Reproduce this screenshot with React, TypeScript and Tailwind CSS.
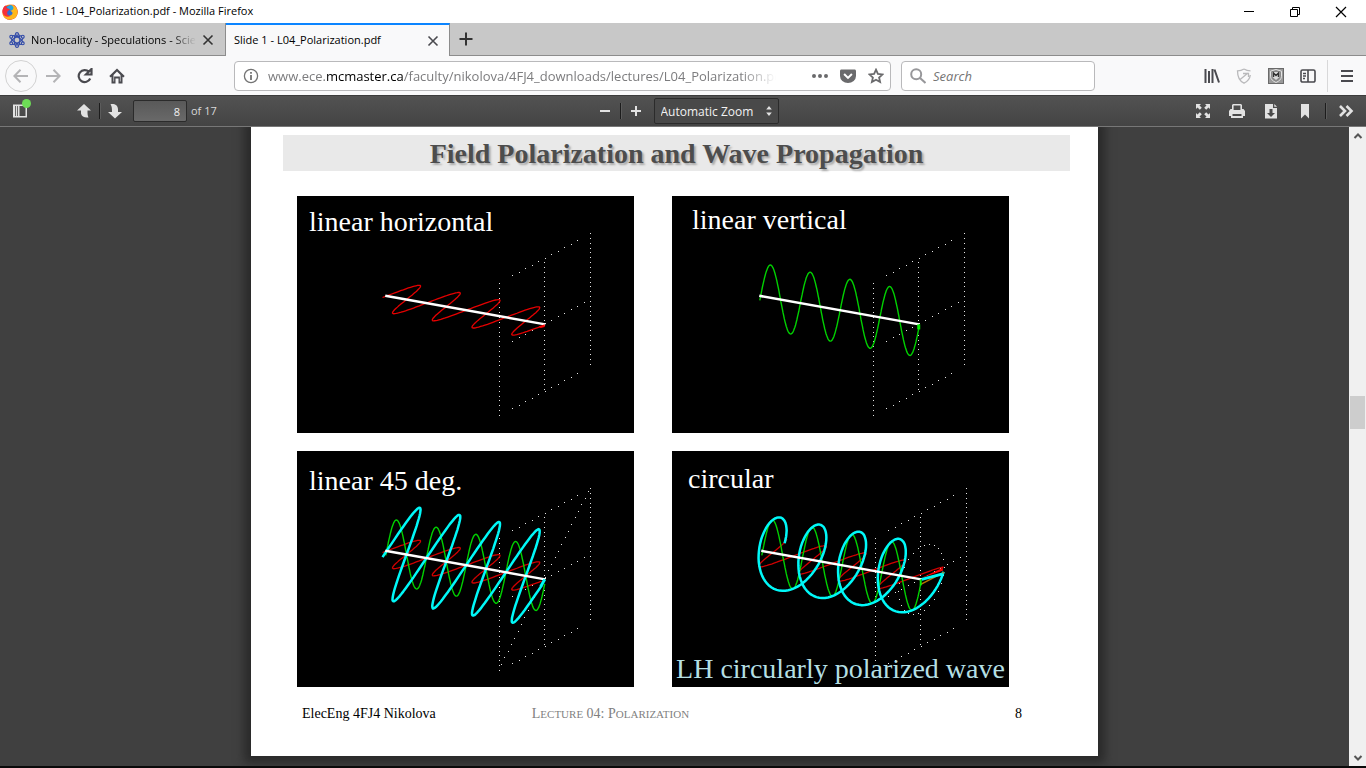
import React, { useState } from "react";

type PlotKind = "horizontal" | "vertical" | "diagonal" | "circular";
type Point = [number, number];

// Plot geometry, in panel units (336 x 236)
const START: Point = [88.5, 99.5];
const END: Point = [247, 128];
const H_AMP: Point = [23, -12.3];
const V_AMP = 32.6;
const CYCLES = 4;
const PHASE = -0.14;

const trace = (h: (a: number) => number, v: (a: number) => number) => {
  const points: string[] = [];
  for (let i = 0; i <= 240; i++) {
    const t = i / 240;
    const a = t * CYCLES * 2 * Math.PI + PHASE;
    const x = START[0] + (END[0] - START[0]) * t + H_AMP[0] * h(a);
    const y =
      START[1] + (END[1] - START[1]) * t + H_AMP[1] * h(a) - V_AMP * v(a);
    points.push(`${x.toFixed(1)},${y.toFixed(1)}`);
  }
  return points.join(" ");
};

const zero = () => 0;

const dotsBetween = (a: Point, b: Point, count: number): Point[] =>
  Array.from({ length: count + 1 }, (_, i) => [
    a[0] + ((b[0] - a[0]) * i) / count,
    a[1] + ((b[1] - a[1]) * i) / count,
  ]);

const planeDots: Point[] = [
  ...dotsBetween([201, 87], [201, 218], 27),
  ...dotsBetween([246, 66], [246, 192], 26),
  ...dotsBetween([292, 37], [292, 168], 27),
  ...dotsBetween([214, 79], [279, 44], 10),
  ...dotsBetween([214, 145], [286, 106], 11),
  ...dotsBetween([214, 211], [279, 176], 10),
];

const diagonalDots = dotsBetween([203, 212], [290, 40], 26);

const circleDots: Point[] = Array.from({ length: 26 }, (_, i) => {
  const a = (i / 26) * 2 * Math.PI;
  return [
    END[0] + H_AMP[0] * Math.cos(a),
    END[1] + H_AMP[1] * Math.cos(a) - V_AMP * Math.sin(a),
  ];
});

const Dots = ({ points }: { points: Point[] }) => (
  <g fill="#e4e4e4" shapeRendering="crispEdges">
    {points.map(([x, y], i) => (
      <rect
        key={i}
        x={Math.round(x)}
        y={Math.round(y)}
        width="1"
        height="1"
      />
    ))}
  </g>
);

const viewBoxes: Record<PlotKind, string> = {
  horizontal: "0 0 336 236",
  vertical: "1 0 336 236",
  diagonal: "0 0 336 236",
  circular: "-1 0 336 236",
};

const WavePlot = ({ kind }: { kind: PlotKind }) => {
  const circular = kind === "circular";
  const h = circular ? Math.cos : Math.sin;
  const both = kind === "diagonal" || circular;
  return (
    <svg viewBox={viewBoxes[kind]} className="block w-full bg-black" fill="none">
      <Dots points={planeDots} />
      {kind === "diagonal" && <Dots points={diagonalDots} />}
      {circular && <Dots points={circleDots} />}
      {kind !== "vertical" && (
        <polyline
          points={trace(h, zero)}
          stroke={both ? "#d00000" : "#e40000"}
          strokeWidth="1.3"
        />
      )}
      {kind !== "horizontal" && (
        <polyline
          points={trace(zero, Math.sin)}
          stroke="#00d000"
          strokeWidth="1.4"
        />
      )}
      {both && (
        <polyline
          points={trace(h, Math.sin)}
          stroke="#00f8f8"
          strokeWidth="2.5"
          strokeLinejoin="round"
        />
      )}
      <path d="M88 99.5L247.5 128" stroke="#fff" strokeWidth="2.5" />
      {kind === "horizontal" && (
        <path d="M241 130l6-2v2.500l-4 1z" fill="#f00" />
      )}
      {kind === "vertical" && <path d="M245.500 128h3v5h-3z" fill="#0e0" />}
      {kind === "diagonal" && (
        <path d="M247 128l-4 7" stroke="#00f8f8" strokeWidth="3" />
      )}
      {circular && (
        <>
          <path d="M247 127l22-10.500v3z" fill="#f00" />
          <path d="M247 133l23-12" stroke="#b87400" strokeWidth="1.5" />
          <path d="M247 128v6" stroke="#0e0" strokeWidth="2" />
          <path d="M248 128l21-5.500" stroke="#00f8f8" strokeWidth="3" />
        </>
      )}
    </svg>
  );
};

const FirefoxLogo = () => (
  <svg viewBox="0 0 16 16" className="h-4 w-4">
    <circle cx="8" cy="8" r="7.600" fill="#ff7a18" />
    <path d="M.6 6C1.500 3 3 2 4 1.500L6 4l5-3.500c3 1 5 4.500 4.600 8A7.600 7.600 0 0 1 1 11z" fill="#e8283c" />
    <circle cx="8.500" cy="6.500" r="5.200" fill="#2f6fd6" />
    <path d="M5 3c2-2 5-2.500 7-1l1 3-3 1-4-.5z" fill="#23a5e0" />
    <path d="M8 6.500c2 0 3-.5 3.500-2.500C11 2 9.500 1 8.500.6c4 .2 7 3 7.100 7.400C15.600 13 12 15.600 8 15.600c-4 0-7-2.600-7.500-6.600C1 10 3 12 6 12c3.500 0 5.500-2.500 4-4z" fill="#ffb81c" />
    <path d="M.5 8c-.2-2.500.8-5 3-6.500L4.500 4 8 5.200 5.500 7.500C4.500 10 6 12 8.500 12 5 14 1 12 .5 8z" fill="#f5303a" />
  </svg>
);

const AtomIcon = () => (
  <svg viewBox="0 0 16 16" className="h-4 w-4" fill="none" stroke="#2f49a8" strokeWidth="1.1">
    <ellipse cx="8" cy="8" rx="2.800" ry="6.700" />
    <ellipse cx="8" cy="8" rx="2.800" ry="6.700" transform="rotate(60 8 8)" />
    <ellipse cx="8" cy="8" rx="2.800" ry="6.700" transform="rotate(120 8 8)" />
    <g fill="#c8c8c8">
      <circle cx="8" cy="2" r="1.400" />
      <circle cx="8" cy="14" r="1.400" />
      <circle cx="2.200" cy="4.700" r="1.400" />
      <circle cx="13.800" cy="4.700" r="1.400" />
      <circle cx="2.200" cy="11.300" r="1.400" />
      <circle cx="13.800" cy="11.300" r="1.400" />
    </g>
  </svg>
);

const Icon = ({
  d,
  filled = false,
  width = 2,
}: {
  d: string;
  filled?: boolean;
  width?: number;
}) => (
  <svg
    viewBox="0 0 16 16"
    className="h-4 w-4 shrink-0"
    fill={filled ? "currentColor" : "none"}
    fillRule="evenodd"
    stroke={filled ? "none" : "currentColor"}
    strokeWidth={width}
  >
    <path d={d} />
  </svg>
);

const IconButton = ({
  label,
  className = "text-[#4a4a4f]",
  children,
}: {
  label: string;
  className?: string;
  children: React.ReactNode;
}) => (
  <button
    aria-label={label}
    className={`flex h-8 w-8 shrink-0 items-center justify-center ${className}`}
  >
    {children}
  </button>
);

const ToolbarButton = ({
  label,
  d,
}: {
  label: string;
  d: string;
}) => (
  <button
    aria-label={label}
    className="flex h-6 w-[34px] shrink-0 items-center justify-center text-[#e2e2e2]"
  >
    <Icon d={d} filled />
  </button>
);

const Divider = () => (
  <div className="h-4 w-px shrink-0 bg-[#1c1c1c] shadow-[1px_0_0_#5c5c5c]" />
);

const TitleBar = () => (
  <header className="flex h-[23px] shrink-0 items-center bg-white pl-0.5 text-black">
    <FirefoxLogo />
    <span className="ml-[5px] text-[11px]">
      Slide 1 - L04_Polarization.pdf - Mozilla Firefox
    </span>
    <div className="ml-auto flex pr-0.5">
      <button aria-label="Minimize" className="flex h-[22px] w-[46px] items-center justify-center">
        <Icon d="M3 7.500h10" width={1} />
      </button>
      <button aria-label="Restore" className="flex h-[22px] w-[46px] items-center justify-center">
        <Icon d="M3.500 5.500h7v7h-7zM5.500 5V3.500h7v7H11" width={1} />
      </button>
      <button aria-label="Close" className="flex h-[22px] w-[46px] items-center justify-center">
        <Icon d="M3 3l10 10M13 3L3 13" width={1.2} />
      </button>
    </div>
  </header>
);

const CLOSE = "M3.500 3.500l9 9M12.500 3.500l-9 9";

const TabStrip = () => (
  <div className="flex h-[33px] shrink-0 bg-[#c8c8c8] text-[11px] text-black">
    <div className="flex w-[226px] items-center border-r border-b border-[#8c8c8c] pt-0.5 pr-[9px] pl-[9px]">
      <AtomIcon />
      <a
        href="#speculations"
        className="ml-1.5 min-w-0 flex-1 overflow-hidden whitespace-nowrap [mask-image:linear-gradient(to_right,#000_85%,transparent)]"
      >
        Non-locality - Speculations - Scientific
      </a>
      <button aria-label="Close tab" className="ml-1 text-[#333]">
        <Icon d={CLOSE} width={1.6} />
      </button>
    </div>
    <div className="flex w-56 items-center border-t-2 border-r border-t-[#0a84ff] border-r-[#8c8c8c] bg-[#f9f9fa] pr-2 pl-2">
      <a href="#slide-1" className="flex-1 whitespace-nowrap">
        Slide 1 - L04_Polarization.pdf
      </a>
      <button aria-label="Close tab" className="text-[#4a4a4f]">
        <Icon d={CLOSE} width={1.6} />
      </button>
    </div>
    <div className="flex flex-1 border-b border-[#8c8c8c]">
      <button aria-label="New tab" className="flex w-8 items-center justify-center text-[#333]">
        <Icon d="M8 1.500v13M1.500 8h13" width={2} />
      </button>
    </div>
  </div>
);

const NavBar = () => (
  <nav className="flex h-[39px] shrink-0 items-center bg-[#f9f9fa] pl-[5px]">
    <button
      aria-label="Back"
      className="flex h-8 w-8 shrink-0 items-center justify-center rounded-full border border-[#d2d2d2] text-[#b4b4b6]"
    >
      <Icon d="M15 8H1.500M7.500 1.800L1.400 8l6.100 6.200" />
    </button>
    <IconButton label="Forward" className="text-[#b4b4b6]">
      <Icon d="M1 8h13.500M8.500 1.800L14.600 8l-6.100 6.200" />
    </IconButton>
    <IconButton label="Reload">
      <Icon d="M13.200 10.500A6 6 0 1 1 12 3.900M14.500 1v5.500H9z" width={2.2} />
    </IconButton>
    <IconButton label="Home">
      <Icon
        filled
        d="M8 .5l7.700 7.600-1.400 1.300-.8-.7V15.500H9.500V10.500h-3v5h-4V8.700l-.8.700L.3 8.100zM8 3.400L4.500 6.900v6.600h.6V8.600h5.800v4.900h.6V6.900z"
      />
    </IconButton>

    <div className="ml-[101px] flex h-[30px] min-w-0 flex-1 items-center rounded-sm border border-[#b9b9bb] bg-white">
      <span className="ml-2 text-[#737373]">
        <svg viewBox="0 0 16 16" className="h-4 w-4" fill="none" stroke="currentColor">
          <circle cx="8" cy="8" r="6.600" strokeWidth="1.300" />
          <path d="M8 7v5M8 4v1.800" strokeWidth="1.800" />
        </svg>
      </span>
      <a
        href="#address"
        className="ml-[9px] min-w-0 flex-1 overflow-hidden pt-0.5 text-[13px] whitespace-nowrap text-[#7c7c7e] [mask-image:linear-gradient(to_right,#000_93%,transparent)]"
      >
        www.ece.<span className="text-black">mcmaster.ca</span>
        /faculty/nikolova/4FJ4_downloads/lectures/L04_Polarization.pdf
      </a>
      <div className="ml-9 flex gap-3 pr-1.5 text-[#6a6a6c]">
        <button aria-label="Page actions">
          <Icon filled d="M0 8a2 2 0 1 1 4 0 2 2 0 0 1-4 0M6 8a2 2 0 1 1 4 0 2 2 0 0 1-4 0M12 8a2 2 0 1 1 4 0 2 2 0 0 1-4 0" />
        </button>
        <button aria-label="Save to Pocket">
          <Icon filled d="M1.500 1.500h13c.9 0 1.500.6 1.500 1.500v5a8 7 0 0 1-16 0V3c0-.9.6-1.500 1.500-1.500zM4.800 5.300L3.400 6.700 8 11.200l4.600-4.500-1.400-1.400L8 8.400z" />
        </button>
        <button aria-label="Bookmark this page">
          <Icon d="M8 1.700l1.900 4.200 4.700.5-3.500 3.100 1 4.600L8 11.800l-4.100 2.300 1-4.600L1.400 6.400l4.700-.5z" width={1.8} />
        </button>
      </div>
    </div>

    <div className="mr-[101px] ml-2.5 flex h-[30px] w-[194px] items-center rounded-sm border border-[#b9b9bb] bg-white pl-2">
      <span className="text-[#97979a]">
        <Icon d="M10 10l5.500 5M11.200 6.200a5 5 0 1 1-10 0 5 5 0 0 1 10 0z" />
      </span>
      <input
        aria-label="Search"
        placeholder="Search"
        className="ml-[7px] w-0 flex-1 pt-0.5 text-[13px] italic outline-none placeholder:text-[#757575]"
      />
    </div>

    <IconButton label="Library">
      <Icon d="M1.500 1v14M5 3v12M8.500 1v14M10.500 1.500L15 14.500" />
    </IconButton>
    <IconButton label="Tracking protection" className="text-[#b9b9bb]">
      <Icon d="M8 1C6 2.300 4 2.800 1.500 2.800 1.500 9 3 13 8 15.200 12.500 13 14 10 14.300 7M8 1c2 1.300 4 1.800 6.500 1.800M3.500 12L12 5M7 5.500h5.500V9" width={1.3} />
    </IconButton>
    <IconButton label="McAfee">
      <svg viewBox="0 0 16 16" className="h-4 w-4">
        <path d="M0 0h16v16H0z" fill="#6a6a6a" />
        <path d="M1 1h14v14H1z" fill="#999" />
        <path d="M8 1.500l5.500 1.700v5c0 3-2.500 5-5.500 6.300-3-1.300-5.500-3.300-5.500-6.300v-5z" fill="#8a8a8a" stroke="#e4e4e4" />
        <path d="M4.500 4h7v5L8 12 4.500 9z" fill="#ddd" />
        <path d="M5.500 9V5L8 7.500 10.500 5v4" fill="none" stroke="#333" strokeWidth="1.500" />
      </svg>
    </IconButton>
    <IconButton label="Sidebars">
      <Icon d="M2.500 2h11A1.500 1.500 0 0 1 15 3.500v9a1.500 1.500 0 0 1-1.500 1.500h-11A1.500 1.500 0 0 1 1 12.500v-9A1.500 1.500 0 0 1 2.500 2zM8 2v12M3 5.500h3M3 8h3M3 10.500h2" width={1.6} />
    </IconButton>
    <div className="ml-[3px] h-8 w-px shrink-0 bg-[#d8d8d9]" />
    <div className="pr-[3px] pl-[3px]">
      <IconButton label="Menu">
        <Icon d="M2 3h12M2 8h12M2 13h12" />
      </IconButton>
    </div>
  </nav>
);

const PdfToolbar = () => {
  const [page, setPage] = useState("8");
  return (
    <div className="flex h-8 shrink-0 items-center border-t border-b border-t-[#3c3c3c] border-b-[#777] bg-linear-to-b from-[#525252] to-[#444] text-[11px] text-[#d9d9d9]">
      <div className="flex flex-1 items-center">
        <button aria-label="Toggle Sidebar" className="relative ml-3 h-4 w-4 text-[#e2e2e2]">
          <Icon filled d="M1 1.500h14v13H1zM7.500 3v10h6V3zM3 3v10h.8V3zM5 3v10h.8V3z" />
          <span className="absolute -top-1 left-2.5 h-[9px] w-[9px] rounded-full bg-[#6ddc56]" />
        </button>
        <div className="ml-[41px] flex items-center">
          <button aria-label="Previous Page" className="flex w-[30px] justify-center text-[#e2e2e2]">
            <Icon filled d="M8 1l7 6.500h-3.500c0 3.500 0 5 1 7-4 .5-7-1-7.500-4V7.500H1z" />
          </button>
          <Divider />
          <button aria-label="Next Page" className="flex w-[30px] justify-center text-[#e2e2e2]">
            <Icon filled d="M8 15.500L1 9h4c0-3.500 0-5.500-1.500-7.800 4-.7 7.500 1 7.500 5V9h4z" />
          </button>
        </div>
        <input
          aria-label="Page"
          value={page}
          onChange={(e) => setPage(e.target.value)}
          className="ml-[3px] h-[22px] w-[54px] rounded-xs border border-[#2b2b2b] bg-linear-to-b from-[#595959] to-[#696969] px-1.5 text-right text-[#f2f2f2] outline-none"
        />
        <span className="ml-1">of 17</span>
      </div>

      <div className="flex items-center pl-0.5">
        <button aria-label="Zoom Out" className="flex w-[30px] justify-center text-[#e2e2e2]">
          <Icon d="M3 8h10" />
        </button>
        <Divider />
        <button aria-label="Zoom In" className="flex w-[30px] justify-center text-[#e2e2e2]">
          <Icon d="M3 8h10M8 3v10" />
        </button>
        <div className="relative ml-[3px]">
          <select
            aria-label="Zoom"
            className="h-[26px] w-[125px] appearance-none rounded-xs border border-[#2b2b2b] bg-[#494949] pt-0.5 pl-1.5 text-xs text-[#f2f2f2] outline-none"
          >
            <option>Automatic Zoom</option>
            <option>Actual Size</option>
            <option>Page Fit</option>
          </select>
          <svg viewBox="0 0 6 10" className="pointer-events-none absolute top-2 right-[7px] h-2.5 w-1.5" fill="#e2e2e2">
            <path d="M3 0l2.800 3.500H.2zM3 10L.2 6.500h5.600z" />
          </svg>
        </div>
      </div>

      <div className="flex flex-1 items-center justify-end">
        <ToolbarButton
          label="Presentation Mode"
          d="M1 1h5L4.500 2.500l2.300 2.300-2 2-2.300-2.300L1 6zM15 1v5l-1.500-1.500-2.300 2.300-2-2 2.300-2.300L10 1zM1 15v-5l1.500 1.500 2.300-2.300 2 2-2.300 2.300L6 15zM15 15h-5l1.500-1.500-2.300-2.300 2-2 2.300 2.300L15 10z"
        />
        <ToolbarButton
          label="Print"
          d="M4 1h8l1 1v4h1.500L16 8v5h-2v2H2v-2H0V8l1.500-2H3V2zM4.600 2.500V7h6.800V2.500zM3.500 11v2h9v-2z"
        />
        <ToolbarButton
          label="Download"
          d="M2 1h8v4h4v10.500H2zM11.300 1L14 3.800h-2.700zM6.500 6v4H4l4 4 4-4H9.500V6z"
        />
        <ToolbarButton label="Bookmark" d="M4 1h8v14.500l-4-4-4 4z" />
        <div className="ml-[3px]">
          <Divider />
        </div>
        <button aria-label="Tools" className="flex w-10 justify-center text-[#e2e2e2]">
          <Icon d="M2 3l5 5-5 5M8.500 3l5 5-5 5" width={2.6} />
        </button>
      </div>
    </div>
  );
};

const panels: { kind: PlotKind; label: string; place: string; note?: string }[] = [
  { kind: "horizontal", label: "linear horizontal", place: "top-2 left-3" },
  { kind: "vertical", label: "linear vertical", place: "top-1.5 left-5" },
  { kind: "diagonal", label: "linear 45 deg.", place: "top-3 left-3" },
  {
    kind: "circular",
    label: "circular",
    place: "top-2.5 left-4",
    note: "LH circularly polarized wave",
  },
];

const Slide = () => (
  <article className="mb-2.5 w-full max-w-[847px] bg-white pt-2 shadow-[0_0_9px_7px_#2a2a2a] font-['Liberation_Serif',serif]">
    <h1 className="mr-7 ml-8 h-9 bg-[#e9e9e9] text-center text-[28px] leading-[38px] font-bold text-[#4d4d4d] [text-shadow:2px_2px_2px_#aaa]">
      Field Polarization and Wave Propagation
    </h1>
    <div className="mt-[25px] grid grid-cols-2 gap-x-[38px] gap-y-[18px] pr-[89px] pl-[46px]">
      {panels.map((panel) => (
        <figure key={panel.kind} className="relative">
          <WavePlot kind={panel.kind} />
          <figcaption
            className={`absolute text-[28px] leading-9 text-white ${panel.place}`}
          >
            {panel.label}
          </figcaption>
          {panel.note && (
            <p className="absolute bottom-0 w-full text-center text-[28px] leading-9 whitespace-nowrap text-[#b4dfe3]">
              {panel.note}
            </p>
          )}
        </figure>
      ))}
    </div>
    <footer className="mt-[17px] flex pr-[76px] pb-8 pl-[51px] text-sm text-black">
      <span>ElecEng 4FJ4 Nikolova</span>
      <span className="ml-24 text-[#7f7f7f]">
        L<span className="text-[11px]">ECTURE</span> 04: P
        <span className="text-[11px]">OLARIZATION</span>
      </span>
      <span className="ml-auto">8</span>
    </footer>
  </article>
);

const Scrollbar = () => (
  <div className="flex w-[17px] shrink-0 flex-col items-center bg-[#f0f0f0] text-[#555]">
    <button aria-label="Scroll up" className="flex h-[17px] items-center">
      <Icon d="M4.500 10L8 6.500l3.500 3.500" />
    </button>
    <div className="flex w-full flex-1 flex-col px-px">
      <div className="grow-[252]" />
      <div className="h-[33px] bg-[#cdcdcd]" />
      <div className="grow-[320]" />
    </div>
    <button aria-label="Scroll down" className="flex h-[17px] items-center">
      <Icon d="M4.500 6L8 9.500 11.500 6" />
    </button>
  </div>
);

const App: React.FC = () => (
  <div className="flex h-screen flex-col overflow-hidden bg-[#404040] font-['Open_Sans',sans-serif]">
    <TitleBar />
    <TabStrip />
    <NavBar />
    <PdfToolbar />
    <div className="flex min-h-0 flex-1">
      <main className="flex min-w-0 flex-1 items-start justify-center overflow-hidden bg-[#404040]">
        <Slide />
      </main>
      <Scrollbar />
    </div>
    <div className="h-0.5 shrink-0 bg-[#0a0a0a]" />
  </div>
);

export default App;
